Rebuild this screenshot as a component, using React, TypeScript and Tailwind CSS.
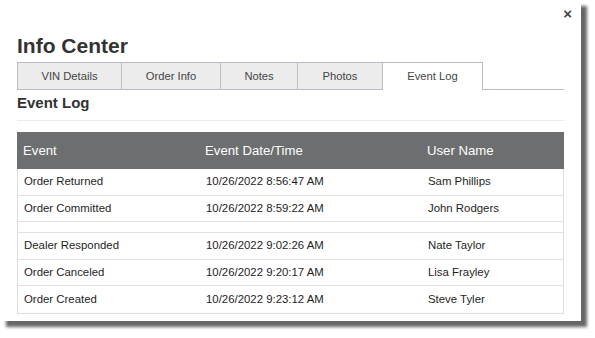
import React from "react";

const tabs = ["VIN Details", "Order Info", "Notes", "Photos", "Event Log"];
const tabWidths = ["w-[105px]", "w-[99px]", "w-[77px]", "w-[85px]", "w-[100px]"];

const rows: ([string, string, string] | null)[] = [
  ["Order Returned", "10/26/2022 8:56:47 AM", "Sam Phillips"],
  ["Order Committed", "10/26/2022 8:59:22 AM", "John Rodgers"],
  null,
  ["Dealer Responded", "10/26/2022 9:02:26 AM", "Nate Taylor"],
  ["Order Canceled", "10/26/2022 9:20:17 AM", "Lisa Frayley"],
  ["Order Created", "10/26/2022 9:23:12 AM", "Steve Tyler"],
];

export default function App() {
  return (
    <div className="w-[595px] h-[338px] bg-white font-['Liberation_Sans',Arial,sans-serif] overflow-hidden">
      <div className="w-[581px] h-[321px] bg-white shadow-[6px_6px_3px_rgba(0,0,0,0.6)] px-[17px]">
        {/* close */}
        <div className="flex justify-end h-[34px] pt-[5px]">
          <span className="text-[15px] leading-[18px] font-bold text-[#444] mr-[-8px]">×</span>
        </div>

        <h1 className="text-[21px] leading-[24px] font-bold text-[#333]">Info Center</h1>

        {/* tabs */}
        <div className="flex mt-[4px] h-[28px] border-b border-[#b8bcc4]">
          {tabs.map((t, i) => {
            const active = t === "Event Log";
            return (
              <div
                key={t}
                className={`${tabWidths[i]} flex items-center justify-center text-[11.2px] text-[#444] border-t border-r border-[#b8bcc4] ${
                  i === 0 ? "border-l" : ""
                } ${active ? "bg-white h-[28px] mb-[-1px]" : "bg-[#ececec]"}`}
              >
                {t}
              </div>
            );
          })}
        </div>

        {/* section heading */}
        <div className="pt-[4px] pb-[8px] border-b border-[#ececec]">
          <h2 className="text-[15px] leading-[18px] font-bold text-[#333]">Event Log</h2>
        </div>

        {/* table */}
        <div className="mt-[11px] border border-[#dedede]">
          <div className="grid grid-cols-[182px_222px_1fr] h-[37px] items-center bg-[#6d6e70] text-white text-[13.2px] px-[6px] mx-[-1px] mt-[-1px]">
            <span>Event</span>
            <span>Event Date/Time</span>
            <span>User Name</span>
          </div>
          {rows.map((r, i) =>
            r ? (
              <div
                key={i}
                className={`grid grid-cols-[182px_222px_1fr] h-[26.6px] items-center px-[6px] text-[11.4px] text-[#1e1e1e] ${
                  i < rows.length - 1 ? "border-b border-[#e2e2e2]" : ""
                }`}
              >
                <span>{r[0]}</span>
                <span>{r[1]}</span>
                <span>{r[2]}</span>
              </div>
            ) : (
              <div key={i} className="h-[11px] border-b border-[#e2e2e2]" />
            )
          )}
        </div>
      </div>
    </div>
  );
}
